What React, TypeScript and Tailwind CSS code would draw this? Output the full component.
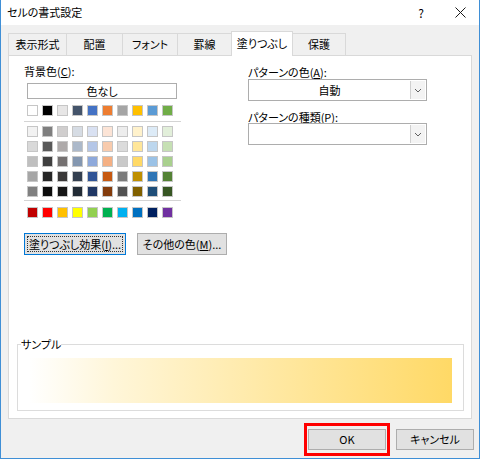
import React from 'react';

const themeRow = ['#FFFFFF', '#000000', '#E7E6E6', '#44546A', '#4472C4', '#ED7D31', '#A5A5A5', '#FFC000', '#5B9BD5', '#70AD47'];

const tintRows = [
  ['#F2F2F2', '#7F7F7F', '#D0CECE', '#D6DCE4', '#D9E1F2', '#FCE4D6', '#EDEDED', '#FFF2CC', '#DDEBF7', '#E2EFDA'],
  ['#D9D9D9', '#595959', '#AEAAAA', '#ACB9CA', '#B4C6E7', '#F8CBAD', '#DBDBDB', '#FFE699', '#BDD7EE', '#C6E0B4'],
  ['#BFBFBF', '#404040', '#757171', '#8497B0', '#8EA9DB', '#F4B084', '#C9C9C9', '#FFD966', '#9BC2E6', '#A9D08E'],
  ['#A6A6A6', '#262626', '#3A3838', '#333F4F', '#305496', '#C65911', '#7B7B7B', '#BF8F00', '#2F75B5', '#548235'],
  ['#808080', '#0D0D0D', '#161616', '#222B35', '#203764', '#833C0C', '#525252', '#806000', '#1F4E78', '#375623'],
];

const standardRow = ['#C00000', '#FF0000', '#FFC000', '#FFFF00', '#92D050', '#00B050', '#00B0F0', '#0070C0', '#002060', '#7030A0'];

const tabs = [
  { label: '表示形式', w: 'w-[59px]' },
  { label: '配置', w: 'w-[57px]' },
  { label: 'フォント', w: 'w-[56px]' },
  { label: '罫線', w: 'w-[55px]' },
  { label: '塗りつぶし', w: 'w-[62px]', active: true },
  { label: '保護', w: 'w-[54px]' },
];

const SwatchRow: React.FC<{ colors: string[] }> = ({ colors }) => (
  <div className="flex gap-[4px]">
    {colors.map((c, i) => (
      <div key={i} className="w-[11px] h-[11px] border border-[#c6c6c6]" style={{ backgroundColor: c }} />
    ))}
  </div>
);

const Chevron = () => (
  <svg width="8" height="5" viewBox="0 0 8 5">
    <path d="M1 1 L4 4 L7 1" fill="none" stroke="#606060" strokeWidth="1" />
  </svg>
);

const Dropdown: React.FC<{ value?: string }> = ({ value }) => (
  <div className="h-[22px] w-[179px] border border-[#adadad] bg-white flex">
    <div className="flex-1 flex items-center justify-center">{value}</div>
    <div className="w-[15px] my-[1px] mr-[1px] bg-[#f3f3f3] border-l border-[#cfcfcf] flex items-center justify-center">
      <Chevron />
    </div>
  </div>
);

export default function App() {
  return (
    <div className="w-[480px] h-[459px] bg-[#f0f0f0] border-x border-b border-[#3f8fd6] flex flex-col font-['Noto_Sans_CJK_JP',sans-serif] [font-feature-settings:'palt'] text-[11px] leading-none text-black">
      {/* title bar */}
      <div className="h-[25px] bg-white flex items-center pl-[6px] shrink-0">
        <span className="flex-1">セルの書式設定</span>
        <span className="w-[40px] text-center text-[12px]">?</span>
        <span className="w-[38px] flex justify-center">
          <svg width="11" height="11" viewBox="0 0 11 11">
            <path d="M0.5 0.5 L10.5 10.5 M10.5 0.5 L0.5 10.5" stroke="#1a1a1a" strokeWidth="1" />
          </svg>
        </span>
      </div>

      <div className="px-[7px] pt-[6px]">
        {/* tabs */}
        <div className="flex items-end h-[24px]">
          {tabs.map((t, i) => (
            <div
              key={t.label}
              className={`${t.w} ${i > 0 ? '-ml-px' : ''} flex items-center justify-center border border-b-0 border-[#d9d9d9] ${
                t.active ? 'h-[25px] bg-white relative z-10 -mb-px pb-[2px]' : 'h-[22px] bg-[#f0f0f0]'
              }`}
            >
              {t.label}
            </div>
          ))}
        </div>

        {/* panel */}
        <div className="h-[364px] bg-white border border-[#d9d9d9] flex flex-col">
          <div className="flex">
            <div className="w-[239px] pl-[15px] flex flex-col">
              <div className="mt-[9px] h-[12px] flex items-center">
                背景色(<span className="underline">C</span>):
              </div>
              <div className="mt-[6px] ml-[3px] w-[150px] h-[16px] border border-[#adadad] bg-white flex items-center justify-center">
                色なし
              </div>
              <div className="mt-[6px] ml-[3px]">
                <SwatchRow colors={themeRow} />
              </div>
              <div className="mt-[5px] w-[157px] h-px bg-[#d4d4d4]" />
              <div className="mt-[4px] ml-[3px] flex flex-col gap-[4px]">
                {tintRows.map((r, i) => (
                  <SwatchRow key={i} colors={r} />
                ))}
              </div>
              <div className="mt-[3px] w-[157px] h-px bg-[#d4d4d4]" />
              <div className="mt-[6px] ml-[3px]">
                <SwatchRow colors={standardRow} />
              </div>
              <div className="mt-[15px] flex gap-[11px]">
                <button className="w-[102px] h-[22px] bg-[#e1e1e1] border border-[#0078d7] outline-1 outline-dotted outline-offset-[-4px] outline-[#333] flex items-center justify-center">
                  塗りつぶし効果(<span className="underline">I</span>)...
                </button>
                <button className="w-[90px] h-[22px] bg-[#e1e1e1] border border-[#adadad] flex items-center justify-center">
                  その他の色(<span className="underline">M</span>)...
                </button>
              </div>
            </div>

            <div className="flex flex-col">
              <div className="mt-[10px] h-[12px] flex items-center">
                パターンの色(<span className="underline">A</span>):
              </div>
              <div className="mt-[1px]">
                <Dropdown value="自動" />
              </div>
              <div className="mt-[10px] h-[12px] flex items-center">
                パターンの種類(<span className="underline">P</span>):
              </div>
              <div className="mt-0">
                <Dropdown />
              </div>
            </div>
          </div>

          {/* sample */}
          <fieldset className="mt-auto mb-[7px] ml-[8px] mr-[7px] border border-[#dcdcdc] px-[3px] pb-[7px]">
            <legend className="px-0 leading-[12px]">サンプル</legend>
            <div className="mt-[8px] mx-[8px] h-[45px] bg-[linear-gradient(to_right,#ffffff_0%,#fff6d9_20%,#ffd966_100%)]" />
          </fieldset>
        </div>

        {/* bottom buttons */}
        <div className="flex justify-end gap-[10px] mt-[10px] pr-[-1px]">
          <div className="relative">
            <button className="w-[78px] h-[21px] bg-[#e1e1e1] border border-[#adadad] flex items-center justify-center">
              OK
            </button>
            <div className="absolute -left-[4px] -right-[4px] -top-[6px] -bottom-[6px] border-[3px] border-[#ff0000] pointer-events-none" />
          </div>
          <button className="w-[78px] h-[21px] bg-[#e1e1e1] border border-[#adadad] flex items-center justify-center mr-[-2px]">
            キャンセル
          </button>
        </div>
      </div>
    </div>
  );
}
